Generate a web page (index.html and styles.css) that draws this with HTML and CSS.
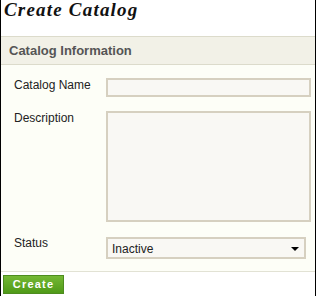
FILE: index.html
```html
<!DOCTYPE html>
<html lang="en">
<head>
  <meta charset="UTF-8">
  <title>Create Catalog</title>
  <link rel="stylesheet" href="styles.css">
</head>
<body>

  <div class="frame">
    <h1 class="page-title">Create Catalog</h1>

    <div class="panel">
      <div class="panel-header">Catalog Information</div>
      <div class="panel-body">
        <label class="field-label" for="catalogName">Catalog Name</label>
        <input class="field-input" id="catalogName" type="text">

        <label class="field-label" for="description">Description</label>
        <textarea class="field-input field-area" id="description"></textarea>

        <label class="field-label" for="status">Status</label>
        <div class="select-wrap">
          <select class="field-select" id="status">
            <option>Inactive</option>
            <option>Active</option>
          </select>
          <span class="select-arrow"></span>
        </div>
      </div>
    </div>

    <div class="actions">
      <button class="btn-create" type="button">Create</button>
    </div>
  </div>

</body>
</html>
```

FILE: styles.css
```css
:root {
  --frame: #000;
  --head-bg: #f2f1e7;
  --head-line: #dcdbcb;
  --body-bg: #fdfef7;
  --field-bg: #f9f8f4;
  --field-line: #d6d0c0;
  --text: #222;
  --head-text: #555;
}

body {
  margin: 0;
  font-family: 'Liberation Sans', Arial, sans-serif;
  background: #fff;
}

.frame {
  width: 314px;
  height: 295px;
  border: 1px solid var(--frame);
  border-top: none;
  display: flex;
  flex-direction: column;
}

.page-title {
  margin: 0 0 16px;
  padding-left: 3px;
  font-family: 'Liberation Serif', 'Times New Roman', serif;
  font-style: italic;
  font-weight: bold;
  font-size: 19px;
  line-height: 20px;
  letter-spacing: 1.2px;
  color: #111;
}

.panel-header {
  background: var(--head-bg);
  border-top: 1px solid var(--head-line);
  border-bottom: 1px solid var(--head-line);
  padding: 6px 8px;
  font-size: 13px;
  line-height: 15px;
  font-weight: bold;
  color: var(--head-text);
}

.panel-body {
  background: var(--body-bg);
  border-bottom: 1px solid #e2e2d4;
  padding: 13px 4px 12px 13px;
  display: grid;
  grid-template-columns: 92px 1fr;
  row-gap: 14px;
  align-items: start;
}

.field-label {
  font-size: 12px;
  line-height: 14px;
  color: var(--text);
}

.field-input {
  box-sizing: border-box;
  width: 205px;
  height: 19px;
  margin: 0;
  border: 2px solid var(--field-line);
  background: var(--field-bg);
  font-family: inherit;
  font-size: 12px;
  outline: none;
}

.field-area {
  height: 111px;
  resize: none;
}

.select-wrap {
  position: relative;
  width: 200px;
  margin-top: 1px;
}

.field-select {
  box-sizing: border-box;
  width: 200px;
  height: 22px;
  margin: 0;
  padding: 1px 0 0 4px;
  border: 2px solid var(--field-line);
  border-radius: 0;
  background: var(--field-bg);
  font-family: inherit;
  font-size: 12px;
  color: var(--text);
  appearance: none;
  -webkit-appearance: none;
}

.select-arrow {
  position: absolute;
  right: 7px;
  top: 10px;
  width: 0;
  height: 0;
  border-left: 4px solid transparent;
  border-right: 4px solid transparent;
  border-top: 4px solid #000;
  pointer-events: none;
}

.actions {
  flex: 1;
  background: #fff;
  padding: 2px 2px;
}

.btn-create {
  width: 61px;
  height: 19px;
  padding: 0;
  border: 1px solid #4d8c1f;
  background: linear-gradient(#74b834, #4f9a18);
  color: #fff;
  font-family: inherit;
  font-size: 11px;
  font-weight: bold;
  letter-spacing: 1.2px;
  cursor: pointer;
}
```
